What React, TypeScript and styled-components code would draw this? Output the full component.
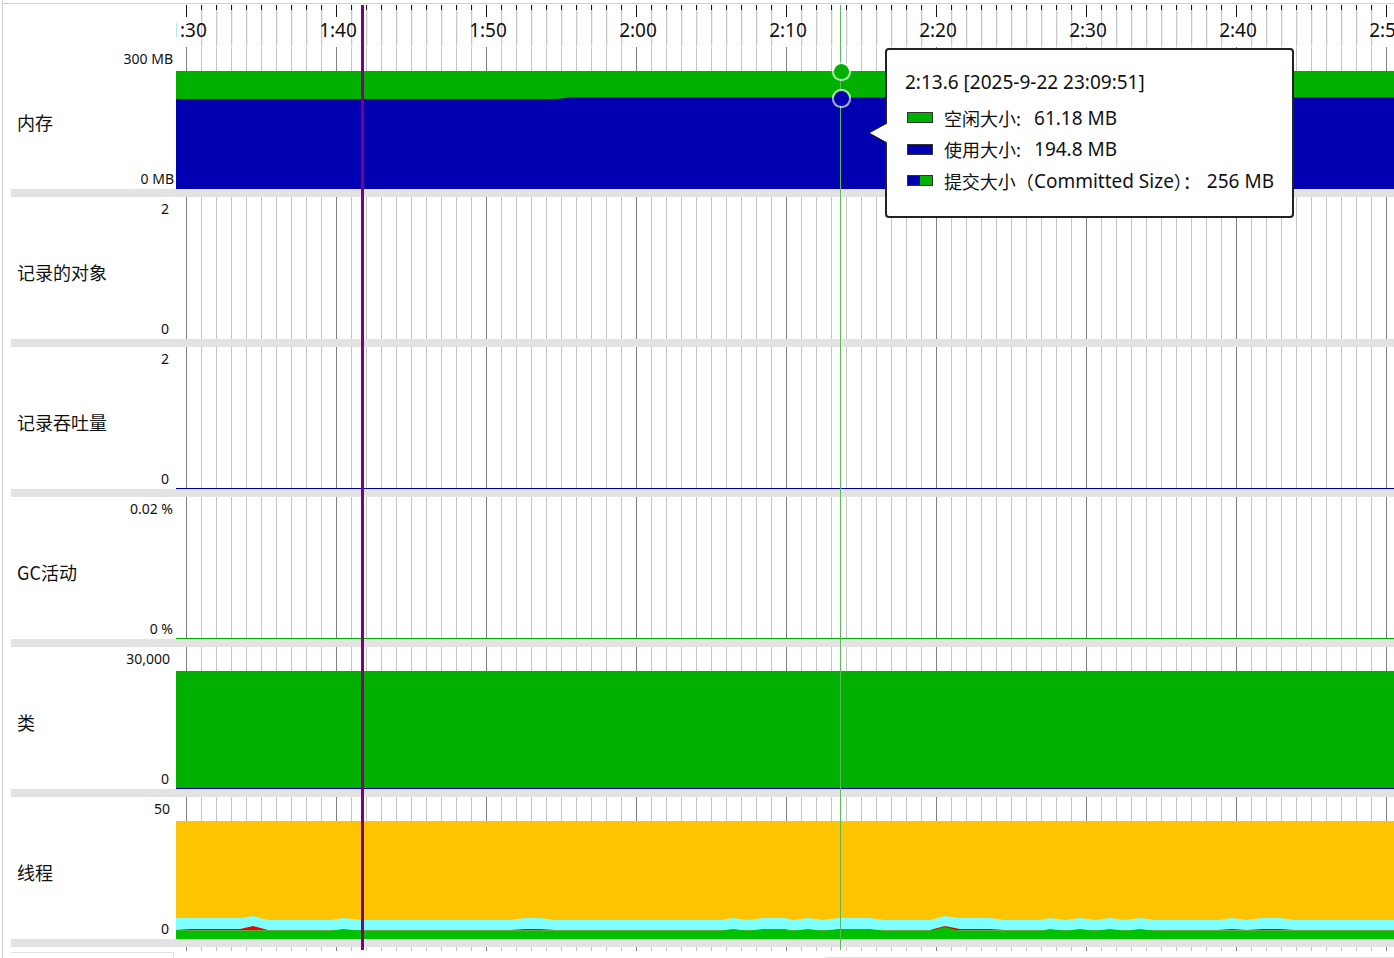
import React from 'react';
import styled, { createGlobalStyle } from 'styled-components';

const PLOT_WIDTH = 1218;
const PLOT_HEIGHT = 142;

// tick positions relative to the plot, one every 15px, major every 10th
const ticks = Array.from({ length: 82 }, (_, i) => ({
  x: 10 + i * 15,
  major: i % 10 === 0,
}));

const timeLabels = ['1:30', '1:40', '1:50', '2:00', '2:10', '2:20', '2:30', '2:40', '2:50'];

// thread chart outlines, [x, y] in page pixels
const cyanTop = [
  [176, 918], [240, 918], [253, 916], [268, 920], [330, 920], [343, 918], [362, 920],
  [510, 920], [525, 918], [540, 918], [555, 920], [720, 920], [733, 918], [748, 920],
  [763, 918], [785, 918], [793, 920], [808, 918], [823, 920], [838, 918], [870, 918],
  [885, 920], [930, 920], [945, 916], [960, 918], [990, 918], [1005, 920], [1040, 920],
  [1050, 918], [1065, 920], [1080, 918], [1095, 920], [1110, 918], [1125, 920], [1140, 918],
  [1155, 920], [1218, 920], [1232, 918], [1247, 920], [1262, 918], [1280, 918], [1295, 920],
  [1394, 920],
];
const redTop = [
  [176, 930], [190, 929], [240, 929], [253, 926], [268, 930], [510, 930], [525, 929],
  [540, 929], [555, 930], [930, 930], [945, 926], [960, 929], [990, 929], [1005, 930],
  [1218, 930], [1232, 929], [1247, 930], [1262, 929], [1280, 929], [1295, 930], [1394, 930],
];
const greenTop = [
  [176, 930], [190, 931], [330, 931], [343, 929], [362, 931], [720, 931], [733, 929],
  [748, 931], [763, 929], [785, 929], [793, 931], [808, 929], [823, 931], [838, 929],
  [870, 929], [885, 931], [930, 931], [945, 927], [960, 931], [1040, 931], [1050, 929],
  [1065, 931], [1080, 929], [1095, 931], [1110, 929], [1125, 931], [1140, 929], [1155, 931],
  [1394, 931],
];

const THREAD_TOP = 797;
const THREAD_BOTTOM = 142;

function area(top: number[][]) {
  const pts = top.map(([x, y]) => `${x - 176},${y - THREAD_TOP}`);
  return `0,${THREAD_BOTTOM} ${pts.join(' ')} ${PLOT_WIDTH},${THREAD_BOTTOM}`;
}

const GlobalStyle = createGlobalStyle`
  html, body {
    margin: 0;
    padding: 0;
    background: #fff;
    overflow: hidden;
  }
  body {
    font-family: "Noto Sans", "Noto Sans CJK SC", sans-serif;
    color: #111;
  }
`;

const Page = styled.div`
  position: relative;
  box-sizing: border-box;
  width: 1392px;
  height: 958px;
  margin-left: 2px;
  padding-top: 3px;
  padding-left: 8px;
  border-left: 1px solid #d0d0d0;
  overflow: hidden;
  background: #fff;

  &::before {
    content: '';
    position: absolute;
    left: 0;
    right: 0;
    top: 3px;
    height: 1px;
    background: #cfcfcf;
  }
`;

const AxisRow = styled.div`
  display: flex;
  height: 44px;
`;

const Corner = styled.div`
  width: 165px;
  flex: none;
`;

const Svg = styled.svg`
  display: block;
  flex: none;
  shape-rendering: crispEdges;
`;

const AxisLabel = styled.text`
  font-family: "Noto Sans", sans-serif;
  font-size: 19px;
  fill: #111;
  text-anchor: middle;
  shape-rendering: auto;
`;

const Row = styled.div`
  display: flex;
  height: 142px;
  border-bottom: 8px solid #e3e3e3;
`;

const Legend = styled.div`
  position: relative;
  width: 165px;
  flex: none;
  display: flex;
  flex-direction: column;
  justify-content: space-between;
  padding: 4px 0 2px;
  box-sizing: border-box;
`;

const Value = styled.div<{ $inset: number }>`
  font-size: 14px;
  line-height: 16px;
  height: 16px;
  text-align: right;
  white-space: nowrap;
  padding-right: ${p => p.$inset}px;
`;

const RowName = styled.div`
  font-family: "Noto Sans CJK SC", "Noto Sans", sans-serif;
  font-size: 18px;
  line-height: 24px;
  padding-left: 6px;
  margin-top: 6px;
`;

const Tail = styled.div`
  position: relative;
  display: flex;
  height: 12px;
`;

const BottomLeftBox = styled.div`
  width: 163px;
  flex: none;
  margin-top: 5px;
  margin-right: 2px;
  height: 20px;
  box-sizing: border-box;
  border: 1px solid #e0e0e0;
  border-left: none;
`;

const BottomRightLine = styled.div`
  position: absolute;
  left: 815px;
  right: 0;
  top: 10px;
  height: 1px;
  background: #e0e0e0;
`;

const Marker = styled.div<{ $x: number; $w: number; $color: string }>`
  position: absolute;
  top: 5px;
  left: ${p => p.$x}px;
  width: ${p => p.$w}px;
  height: 945px;
  background: ${p => p.$color};
`;

const Dot = styled.div<{ $y: number; $color: string }>`
  position: absolute;
  left: 829px;
  top: ${p => p.$y}px;
  width: 19px;
  height: 19px;
  box-sizing: border-box;
  border-radius: 50%;
  background: ${p => p.$color};
  border: 2px solid rgba(255, 255, 255, 0.55);
  background-clip: padding-box;
  box-shadow: 0 0 1px rgba(255, 255, 255, 0.5);
`;

const Tooltip = styled.div`
  position: absolute;
  left: 882px;
  top: 48px;
  width: 409px;
  height: 170px;
  box-sizing: border-box;
  padding: 20px 18px 0;
  background: #fff;
  border: 2px solid #222;
  border-radius: 4px;
  font-size: 19px;
  line-height: 24px;
  color: #111;
`;

const Arrow = styled.svg`
  position: absolute;
  left: -19px;
  top: 73px;
  display: block;
`;

const TipTitle = styled.div`
  white-space: nowrap;
  margin-bottom: 8px;
`;

const TipRow = styled.div`
  display: flex;
  align-items: center;
  height: 31.5px;
  white-space: nowrap;
`;

const Swatch = styled.div<{ $kind: 'free' | 'used' | 'committed' }>`
  width: 26px;
  height: 11px;
  box-sizing: border-box;
  margin: 0 11px 0 2px;
  border: 1px solid #333;
  background: ${p =>
    p.$kind === 'free'
      ? '#00b000'
      : p.$kind === 'used'
        ? '#0000b0'
        : 'linear-gradient(to right, #0000b0 50%, #00b000 50%)'};
`;

const TipName = styled.span`
  font-family: "Noto Sans CJK SC", "Noto Sans", sans-serif;
  font-size: 18px;
`;

const TipValue = styled.span<{ $gap: number }>`
  margin-left: ${p => p.$gap}px;
`;

function TimeAxis() {
  return (
    <AxisRow>
      <Corner />
      <Svg width={PLOT_WIDTH} height={44} viewBox={`0 0 ${PLOT_WIDTH} 44`}>
        {ticks.map(t =>
          t.major ? (
            <rect key={t.x} x={t.x} y={2} width={1} height={12} fill="#111" />
          ) : (
            <g key={t.x}>
              <rect x={t.x} y={2} width={1} height={41} fill="#c8c8c8" />
              <rect x={t.x + 1} y={2} width={1} height={41} fill="#eeeeee" />
              <rect x={t.x} y={2} width={1} height={5} fill="#111" />
            </g>
          ),
        )}
        {timeLabels.map((l, i) => (
          <AxisLabel key={l} x={12 + i * 150} y={34}>
            {l}
          </AxisLabel>
        ))}
      </Svg>
    </AxisRow>
  );
}

function Plot({ children }: { children?: React.ReactNode }) {
  return (
    <Svg width={PLOT_WIDTH} height={PLOT_HEIGHT} viewBox={`0 0 ${PLOT_WIDTH} ${PLOT_HEIGHT}`}>
      {ticks.map(t => (
        <rect
          key={t.x}
          x={t.x}
          y={0}
          width={1}
          height={PLOT_HEIGHT}
          fill={t.major ? '#808080' : '#c4c4c4'}
        />
      ))}
      {children}
    </Svg>
  );
}

function ChartRow(props: {
  name: string;
  top: string;
  bottom: string;
  topInset: number;
  bottomInset: number;
  children?: React.ReactNode;
}) {
  return (
    <Row>
      <Legend>
        <Value $inset={props.topInset}>{props.top}</Value>
        <RowName>{props.name}</RowName>
        <Value $inset={props.bottomInset}>{props.bottom}</Value>
      </Legend>
      <Plot>{props.children}</Plot>
    </Row>
  );
}

export default function App() {
  return (
    <>
      <GlobalStyle />
      <Page>
        <TimeAxis />
        <ChartRow name="内存" top="300 MB" bottom="0 MB" topInset={3} bottomInset={2}>
          <rect x={0} y={24} width={PLOT_WIDTH} height={118} fill="#00b000" />
          <polygon
            points={`0,52 381,52 394,50.5 ${PLOT_WIDTH},50.5 ${PLOT_WIDTH},142 0,142`}
            fill="#0000b0"
            style={{ shapeRendering: 'auto' }}
          />
        </ChartRow>
        <ChartRow name="记录的对象" top="2" bottom="0" topInset={7} bottomInset={7} />
        <ChartRow name="记录吞吐量" top="2" bottom="0" topInset={7} bottomInset={7}>
          <rect x={0} y={141} width={PLOT_WIDTH} height={1} fill="#0000b0" />
        </ChartRow>
        <ChartRow name="GC活动" top="0.02 %" bottom="0 %" topInset={3} bottomInset={3}>
          <rect x={0} y={141} width={PLOT_WIDTH} height={1} fill="#00b000" />
        </ChartRow>
        <ChartRow name="类" top="30,000" bottom="0" topInset={6} bottomInset={7}>
          <rect x={0} y={24} width={PLOT_WIDTH} height={118} fill="#00b000" />
          <rect x={0} y={141} width={PLOT_WIDTH} height={1} fill="#0000b0" />
        </ChartRow>
        <ChartRow name="线程" top="50" bottom="0" topInset={6} bottomInset={7}>
          <g style={{ shapeRendering: 'auto' }}>
            <rect x={0} y={24} width={PLOT_WIDTH} height={118} fill="#ffc400" />
            <polygon points={area(cyanTop)} fill="#80ffff" />
            <polygon points={area(redTop)} fill="#f00000" />
            <rect x={0} y={133} width={PLOT_WIDTH} height={1} fill="#6fa040" />
            <polygon points={area(greenTop)} fill="#00c000" />
          </g>
        </ChartRow>
        <Tail>
          <BottomLeftBox />
          <Svg width={PLOT_WIDTH} height={4} viewBox={`0 0 ${PLOT_WIDTH} 4`}>
            {ticks.map(t => (
              <rect key={t.x} x={t.x} y={0} width={1} height={4} fill={t.major ? '#808080' : '#c4c4c4'} />
            ))}
          </Svg>
          <BottomRightLine />
        </Tail>

        <Marker $x={837} $w={1} $color="#5cb85c" />
        <Marker $x={358} $w={3} $color="#7f007f" />
        <Dot $y={62} $color="#00b000" />
        <Dot $y={89} $color="#0000b0" />

        <Tooltip>
          <Arrow width={20} height={20} viewBox="0 0 20 20">
            <polygon points="20,0 1,10 20,20" fill="#fff" />
            <polyline points="18,0.5 1,10 18,19.5" fill="none" stroke="#222" strokeWidth={1} />
          </Arrow>
          <TipTitle>2:13.6 [2025-9-22 23:09:51]</TipTitle>
          <TipRow>
            <Swatch $kind="free" />
            <TipName>空闲大小:</TipName>
            <TipValue $gap={13}>61.18 MB</TipValue>
          </TipRow>
          <TipRow>
            <Swatch $kind="used" />
            <TipName>使用大小:</TipName>
            <TipValue $gap={13}>194.8 MB</TipValue>
          </TipRow>
          <TipRow>
            <Swatch $kind="committed" />
            <TipName>提交大小（</TipName>
            <span>Committed Size</span>
            <TipName>）：</TipName>
            <TipValue $gap={6}>256 MB</TipValue>
          </TipRow>
        </Tooltip>
      </Page>
    </>
  );
}
